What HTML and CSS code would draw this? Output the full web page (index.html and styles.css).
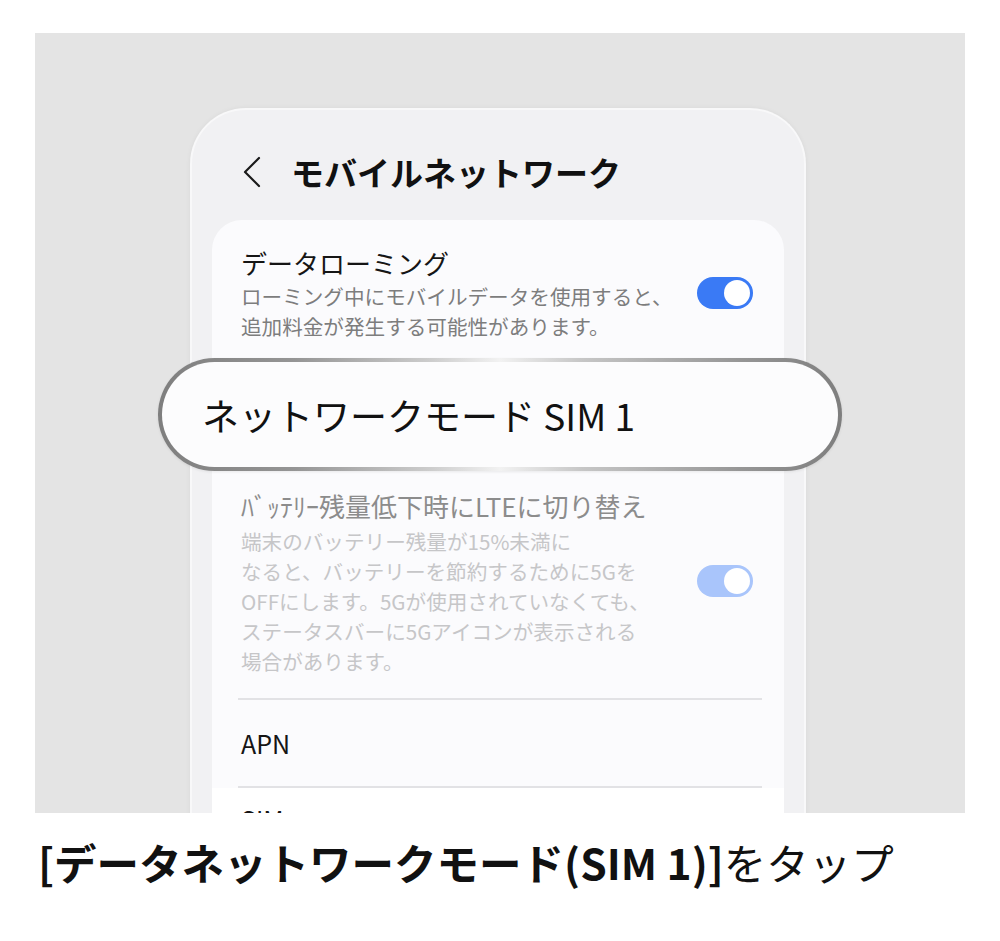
FILE: index.html
```html
<!DOCTYPE html>
<html lang="ja">
<head>
    <meta charset="utf-8">
    <title>モバイルネットワーク</title>
    <link rel="stylesheet" href="styles.css">
</head>
<body>
    <div class="stage">
        <div class="phone">
            <div class="appbar">
                <svg class="back" width="20" height="32" viewBox="0 0 20 32">
                    <path d="M17 2 L3 16 L17 30" fill="none" stroke="#1a1a1a" stroke-width="2.2" stroke-linecap="round" stroke-linejoin="round"/>
                </svg>
                <h1>モバイルネットワーク</h1>
            </div>

            <div class="card">
                <div class="item">
                    <div class="item-text">
                        <div class="item-title">データローミング</div>
                        <div class="item-desc">ローミング中にモバイルデータを使用すると、<br>追加料金が発生する可能性があります。</div>
                    </div>
                    <div class="toggle"><span class="thumb"></span></div>
                </div>

                <div class="callout">ネットワークモード SIM 1</div>

                <div class="item disabled">
                    <div class="item-text">
                        <div class="item-title">ﾊﾞｯﾃﾘｰ残量低下時にLTEに切り替え</div>
                        <div class="item-desc">端末のバッテリー残量が15%未満に<br>なると、バッテリーを節約するために5Gを<br>OFFにします。5Gが使用されていなくても、<br>ステータスバーに5Gアイコンが表示される<br>場合があります。</div>
                    </div>
                    <div class="toggle"><span class="thumb"></span></div>
                </div>

                <div class="divider"></div>
                <div class="item plain">APN</div>
                <div class="divider"></div>
                <div class="item plain next">SIM</div>
            </div>
        </div>
    </div>

    <p class="caption"><strong>[データネットワークモード(SIM 1)]</strong>をタップ</p>
</body>
</html>
```

FILE: styles.css
```css
body {
    margin: 0;
    background: #ffffff;
    font-family: "Noto Sans CJK JP", "Noto Sans", sans-serif;
    color: #151515;
}

.stage {
    width: 930px;
    height: 780px;
    margin: 33px 0 0 35px;
    background-color: #e4e4e4;
    overflow: hidden;
}

.phone {
    width: 612px;
    height: 720px;
    margin: 75px 0 0 155px;
    background-color: #f1f1f3;
    border: 2px solid #f8f8f9;
    border-bottom: none;
    border-radius: 56px 56px 0 0;
    box-shadow: 0 0 5px rgba(0, 0, 0, 0.05);
}

.appbar {
    display: flex;
    align-items: center;
    gap: 29px;
    padding: 42px 0 28px 50px;
}

.appbar h1 {
    margin: 0;
    font-size: 33px;
    line-height: 40px;
    font-weight: 700;
    color: #111;
}

.card {
    margin: 0 20px;
    padding-top: 25px;
    background-color: #fbfbfd;
    border-radius: 30px 30px 0 0;
}

.item {
    display: flex;
    align-items: center;
    gap: 20px;
    padding: 0 31px 0 29px;
}

.item-text {
    flex: 1;
}

.item-title {
    font-size: 26px;
    line-height: 36px;
}

.item-desc {
    font-size: 20.6px;
    line-height: 30px;
    color: #7d7d7d;
}

.item.disabled {
    margin-top: 15px;
    padding-bottom: 22px;
}

.item.disabled .item-title {
    line-height: 40px;
    color: #8c8c8c;
}

.item.disabled .item-desc {
    color: #c6c6c8;
}

.item.plain {
    height: 86px;
    font-size: 25px;
}

/* next row only peeks in at the bottom */
.item.next {
    height: 44px;
    align-items: flex-end;
    line-height: 1;
    background-color: #ffffff;
}

.divider {
    height: 2px;
    margin: 0 22px 0 26px;
    background-color: #e2e2e5;
}

/* toggle switch */
.toggle {
    flex-shrink: 0;
    display: flex;
    justify-content: flex-end;
    align-items: center;
    width: 56px;
    height: 32px;
    padding: 0 3px;
    box-sizing: border-box;
    border-radius: 16px;
    background-color: #3a7af5;
}

.disabled .toggle {
    background-color: #a9c5fb;
}

.thumb {
    width: 26px;
    height: 26px;
    border-radius: 50%;
    background-color: #ffffff;
}

/* highlighted row drawn over the list */
.callout {
    display: flex;
    align-items: center;
    height: 105px;
    margin: 17px -58px 0 -54px;
    padding-left: 40px;
    font-size: 37px;
    font-weight: 400;
    color: #111;
    border: 4px solid transparent;
    border-radius: 60px;
    background:
        linear-gradient(#fcfcfd, #fcfcfd) padding-box,
        linear-gradient(90deg, #7e7e7e 0%, #959595 20%, #cdcdcd 40%, #f2f2f2 50%, #c6c6c6 62%, #969696 85%, #7e7e7e 100%) border-box;
    box-shadow: 0 1px 3px rgba(0, 0, 0, 0.08);
}

.caption {
    margin: 18px 0 0 38px;
    font-size: 42.5px;
    line-height: 62px;
    color: #111;
    white-space: nowrap;
}

.caption strong {
    font-weight: 700;
}
```
